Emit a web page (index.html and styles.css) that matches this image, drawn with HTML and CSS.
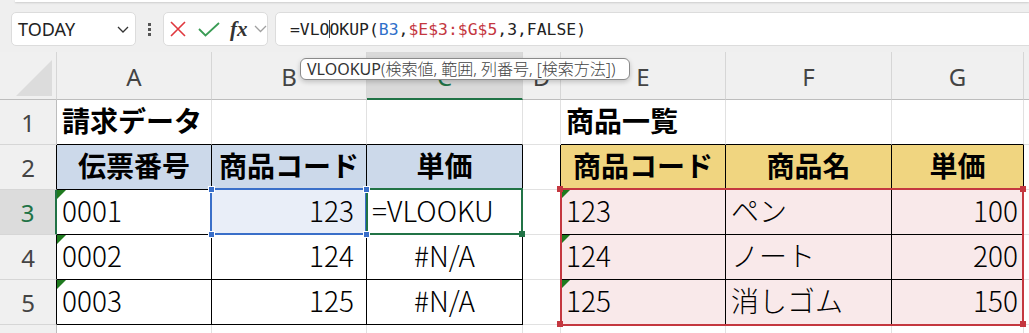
FILE: index.html
```html
<!DOCTYPE html>
<html lang="ja">
<head>
  <meta charset="UTF-8" />
  <title>請求データ • VLOOKUP</title>
  <meta name="viewport" content="width=device-width, initial-scale=1.0" />
  <link rel="stylesheet" href="styles.css">
</head>
<body>

  <div class="ribbon-edge"></div>

  <!-- Barra de fórmulas -->
  <div class="formula-bar">
    <div class="name-box">
      <span>TODAY</span>
      <svg width="12" height="7" viewBox="0 0 12 7"><polyline points="1,1 6,6 11,1" fill="none" stroke="#333" stroke-width="1.3"/></svg>
    </div>
    <div class="grip"><i></i><i></i><i></i></div>
    <div class="fx-box">
      <svg class="ic-x" width="16" height="16" viewBox="0 0 16 16"><path d="M1 1L15 15M15 1L1 15" stroke="#e0383e" stroke-width="1.6"/></svg>
      <svg class="ic-ok" width="22" height="15" viewBox="0 0 22 15"><polyline points="1,7 7.5,13.5 21,1" fill="none" stroke="#3a9c55" stroke-width="1.8"/></svg>
      <span class="fx">fx</span>
      <svg class="ic-dd" width="13" height="8" viewBox="0 0 13 8"><polyline points="1,1 6.5,6.5 12,1" fill="none" stroke="#a0a0a0" stroke-width="1.3"/></svg>
    </div>
    <div class="formula-input">=VLO<span class="caret"></span>OKUP(<span class="ref-b">B3</span>,<span class="ref-r">$E$3:$G$5</span>,3,FALSE)</div>
  </div>

  <!-- Planilha -->
  <div class="sheet">
    <div class="ch corner"></div>
    <div class="ch">A</div>
    <div class="ch">B</div>
    <div class="ch ch-sel">C</div>
    <div class="ch">D</div>
    <div class="ch">E</div>
    <div class="ch">F</div>
    <div class="ch">G</div>
    <div class="ch"></div>

    <div class="rh">1</div>
    <div class="c tt title">請求データ</div>
    <div class="c tt"></div>
    <div class="c tt"></div>
    <div class="c"></div>
    <div class="c tt title">商品一覧</div>
    <div class="c tt"></div>
    <div class="c tt"></div>
    <div class="c"></div>

    <div class="rh tl">2</div>
    <div class="c tb hd-blue">伝票番号</div>
    <div class="c tb hd-blue">商品コード</div>
    <div class="c tb hd-blue">単価</div>
    <div class="c tl"></div>
    <div class="c tb hd-gold">商品コード</div>
    <div class="c tb hd-gold">商品名</div>
    <div class="c tb hd-gold">単価</div>
    <div class="c"></div>

    <div class="rh rh-sel">3</div>
    <div class="c tb flag">0001</div>
    <div class="c tb num col-b ref-cell">123</div>
    <div class="c tb">=VLOOKU</div>
    <div class="c tl"></div>
    <div class="c tb pk flag">123</div>
    <div class="c tb pk">ペン</div>
    <div class="c tb pk num">100</div>
    <div class="c"></div>

    <div class="rh tl">4</div>
    <div class="c tb flag">0002</div>
    <div class="c tb num col-b">124</div>
    <div class="c tb ctr">#N/A</div>
    <div class="c tl"></div>
    <div class="c tb pk flag">124</div>
    <div class="c tb pk">ノート</div>
    <div class="c tb pk num">200</div>
    <div class="c"></div>

    <div class="rh tl">5</div>
    <div class="c tb flag">0003</div>
    <div class="c tb num col-b">125</div>
    <div class="c tb ctr">#N/A</div>
    <div class="c tl"></div>
    <div class="c tb pk flag">125</div>
    <div class="c tb pk">消しゴム</div>
    <div class="c tb pk num">150</div>
    <div class="c"></div>

    <div class="rh"></div>
    <div class="c"></div>
    <div class="c"></div>
    <div class="c"></div>
    <div class="c"></div>
    <div class="c"></div>
    <div class="c"></div>
    <div class="c"></div>
    <div class="c"></div>

    <!-- seleções por cima da grade -->
    <div class="sel sel-blue"></div>
    <div class="sel sel-green"></div>
    <div class="sel sel-red"></div>
    <i class="hd blue" style="left:208px;top:134px"></i>
    <i class="hd blue" style="left:363px;top:134px"></i>
    <i class="hd blue" style="left:208px;top:179px"></i>
    <i class="hd blue" style="left:363px;top:179px"></i>
    <i class="hd green" style="left:519px;top:179px"></i>
    <i class="hd red" style="left:557px;top:134px"></i>
    <i class="hd red" style="left:1020px;top:134px"></i>
    <i class="hd red" style="left:557px;top:269px"></i>
    <i class="hd red" style="left:1020px;top:269px"></i>

    <div class="tip"><b>VLOOKUP</b>(検索値, 範囲, 列番号, [検索方法])</div>
  </div>

</body>
</html>
```

FILE: styles.css
```css
/* Reset básico */
* { box-sizing: border-box; margin: 0; padding: 0; }

body {
  background: #efefef;
  font-family: 'Noto Sans', 'Noto Sans CJK JP', sans-serif;
  color: #222;
  overflow: hidden;
  height: 333px;
}

.ribbon-edge {
  height: 2px;
  margin-left: 15px;
  background: #fff;
  box-shadow: 0 1px 2px rgba(0,0,0,0.15);
}

/* Barra de fórmulas */
.formula-bar {
  height: 50px;
  display: flex;
  align-items: flex-start;
  padding: 10px 0 0 11px;
}

.name-box {
  width: 125px;
  height: 34px;
  background: #fff;
  border: 1px solid #dcdcdc;
  border-radius: 5px;
  display: flex;
  align-items: center;
  justify-content: space-between;
  padding: 0 6px 0 6px;
  font-size: 18px;
}

.grip {
  width: 27px;
  height: 34px;
  display: flex;
  flex-direction: column;
  align-items: center;
  justify-content: center;
  gap: 2px;
}
.grip i {
  width: 3px;
  height: 3px;
  background: #555;
}

.fx-box {
  width: 105px;
  height: 34px;
  background: #fff;
  border: 1px solid #dcdcdc;
  border-radius: 5px;
  display: flex;
  align-items: center;
  padding-left: 6px;
}
.ic-x { margin-right: 12px; }
.ic-ok { margin-right: 10px; }
.fx {
  font-family: 'Liberation Serif', serif;
  font-style: italic;
  font-weight: bold;
  font-size: 21px;
  color: #333;
  margin-right: 6px;
  line-height: 1;
}

.formula-input {
  flex: 1;
  height: 34px;
  margin-left: 7px;
  margin-right: -10px;
  background: #fff;
  border: 1px solid #dcdcdc;
  border-radius: 5px;
  padding-left: 14px;
  font-family: 'DejaVu Sans Mono', monospace;
  font-size: 16.4px;
  line-height: 33px;
  color: #222;
  white-space: nowrap;
}
.caret {
  display: inline-block;
  width: 1px;
  height: 18px;
  margin-right: -1px;
  background: #444;
  vertical-align: -3px;
}
.ref-b { color: #2f6fca; }
.ref-r { color: #c4373f; }

/* Planilha */
.sheet {
  position: relative;
  display: grid;
  grid-template-columns: 57px 155px 155px 156px 38px 165px 166px 132px 1fr;
  grid-template-rows: 48px repeat(6, 45px);
  background: #fff;
  font-family: 'Noto Sans CJK JP', sans-serif;
  font-size: 28px;
  font-weight: 300;
  color: #000;
}

.ch, .rh {
  background: #f0f0f0;
  display: flex;
  align-items: center;
  justify-content: center;
  font-family: 'Noto Sans', sans-serif;
  font-size: 24px;
  font-weight: 400;
  color: #444;
}
.ch {
  border-right: 1px solid #d6d6d6;
  border-bottom: 1px solid #bdbdbd;
  padding-top: 2px;
}
.rh {
  border-right: 1px solid #bdbdbd;
  border-bottom: 1px solid #d6d6d6;
}
.ch-sel {
  background: #d9d9d9;
  color: #217346;
  border-bottom: 2px solid #217346;
}
.rh-sel {
  background: #dcdcdc;
  color: #217346;
  border-right: 2px solid #217346;
}
.corner { position: relative; }
.corner::after {
  content: "";
  position: absolute;
  right: 4px;
  bottom: 3px;
  width: 36px;
  height: 36px;
  background: #dcdcdc;
  clip-path: polygon(100% 0, 100% 100%, 0 100%);
}

.c {
  position: relative;
  display: flex;
  align-items: center;
  padding: 0 5px 5px;
  border-right: 1px solid #e1e1e1;
  border-bottom: 1px solid #e1e1e1;
  white-space: nowrap;
  overflow: hidden;
  line-height: 1;
}
.tt { border-bottom-color: #000; }
.tl { border-right-color: #000; }
.tb { border-right-color: #000; border-bottom-color: #000; }

.title { font-weight: bold; }
.hd-blue, .hd-gold { font-weight: bold; justify-content: center; }
.hd-blue { background: #ccd9ea; }
.hd-gold { background: #f0d580; }
.pk { background: #f9e9ea; }
.ref-cell { background: #e9eef8; }
.num { justify-content: flex-end; }
.col-b { padding-right: 12px; }
.ctr { justify-content: center; }

/* triângulo verde de aviso */
.flag::before {
  content: "";
  position: absolute;
  left: 0;
  top: 0;
  border-top: 9px solid #1f7a1f;
  border-right: 9px solid transparent;
}

/* bordas de seleção */
.sel {
  position: absolute;
  border: 2px solid;
}
.sel-blue { left: 210px; top: 136px; width: 157px; height: 47px; border-color: #3a6fc9; }
.sel-green { left: 366px; top: 136px; width: 157px; height: 47px; border-color: #217346; }
.sel-red { left: 560px; top: 136px; width: 464px; height: 138px; border-color: #c4373f; }

.hd {
  position: absolute;
  width: 6px;
  height: 6px;
}
.hd.blue { background: #3a6fc9; border: 1px solid #fff; width: 7px; height: 7px; }
.hd.green { background: #217346; }
.hd.red { background: #c4373f; }

/* dica da função */
.tip {
  position: absolute;
  left: 300px;
  top: 6px;
  width: 330px;
  height: 22px;
  background: #fff;
  border: 1px solid #8a8a8a;
  border-radius: 6px;
  box-shadow: 0 2px 5px rgba(0,0,0,0.2);
  padding-left: 6px;
  font-family: 'Noto Sans', 'Noto Sans CJK JP', sans-serif;
  font-size: 16px;
  line-height: 20px;
  color: #444;
  white-space: nowrap;
  overflow: hidden;
}
.tip b { color: #333; }
```
